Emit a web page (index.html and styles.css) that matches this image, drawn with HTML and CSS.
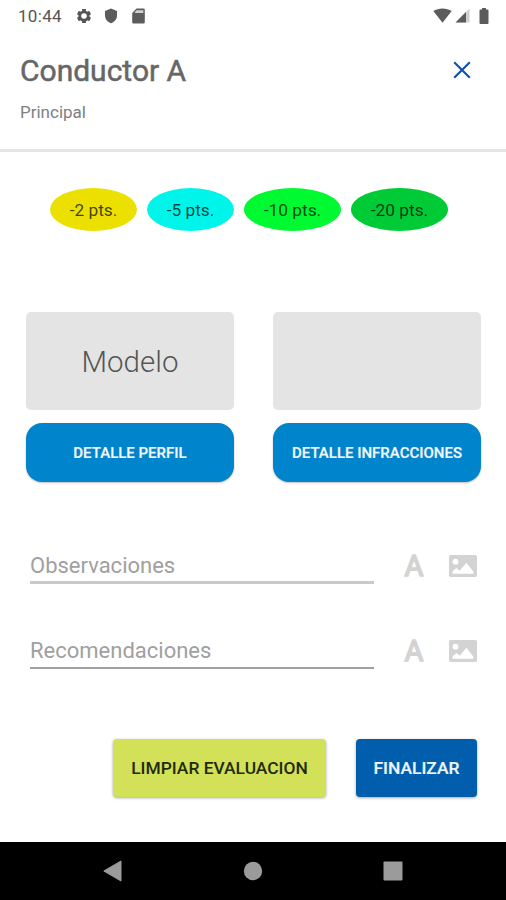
FILE: index.html
```html
<!DOCTYPE html>
<html lang="es">
<head>
  <meta charset="UTF-8" />
  <meta name="viewport" content="width=device-width, initial-scale=1.0" />
  <title>Conductor A</title>
  <link rel="stylesheet" href="styles.css">
</head>
<body>
  <div class="screen">
    <div class="status-bar">
      <span class="time">10:44</span>
      <svg class="icon-gear" width="16" height="16" viewBox="0 0 16 16">
        <path d="M8 1v14M1.9 4.5l12.2 7M14.1 4.5l-12.2 7" stroke="#555" stroke-width="3.8" />
        <circle cx="8" cy="8" r="5.6" fill="#555" />
        <circle cx="8" cy="8" r="2.8" fill="#fff" />
      </svg>
      <svg class="icon-shield" width="14" height="16" viewBox="0 0 14 16">
        <path d="M7 .6l6 2.3v4.6c0 3.6-2.5 6.500-6 7.800-3.500-1.300-6-4.200-6-7.800V2.900z" fill="#5c5c5c" />
      </svg>
      <svg class="icon-card" width="13" height="16" viewBox="0 0 13 16">
        <path d="M4.500.5h7A1.300 1.300 0 0 1 12.800 1.800v12.400a1.300 1.300 0 0 1-1.300 1.300h-10A1.300 1.300 0 0 1 .2 14.200V5z" fill="#5c5c5c" />
        <path d="M4.400 2.200h7v2.900H2.500z" fill="#d0d0d0" />
      </svg>
      <div class="status-right">
        <svg width="19" height="15" viewBox="0 0 19 15">
          <path d="M.3 3C5.500-.5 13.500-.5 18.700 3L9.500 14.700z" fill="#5c5c5c" />
        </svg>
        <svg class="icon-signal" width="15" height="15" viewBox="0 0 15 15">
          <path d="M14.500.5v14H.5z" fill="#d0d0d0" />
          <path d="M11 4v10.500H.5z" fill="#5c5c5c" />
        </svg>
        <svg class="icon-battery" width="10" height="16" viewBox="0 0 10 16">
          <path d="M3 0h4v1.600h1.500a1 1 0 0 1 1 1V15a1 1 0 0 1-1 1h-7a1 1 0 0 1-1-1V2.600a1 1 0 0 1 1-1H3z" fill="#5c5c5c" />
        </svg>
      </div>
    </div>

    <header>
      <div>
        <h1>Conductor A</h1>
        <p>Principal</p>
      </div>
      <svg class="close" width="18" height="18" viewBox="0 0 18 18">
        <path d="M1.200 1.200l15.600 15.600M16.800 1.200L1.200 16.800" stroke="#0f4fae" stroke-width="2.100" />
      </svg>
    </header>

    <div class="points">
      <div class="pill yellow">-2 pts.</div>
      <div class="pill cyan">-5 pts.</div>
      <div class="pill green wide">-10 pts.</div>
      <div class="pill dark-green wide">-20 pts.</div>
    </div>

    <div class="details">
      <div class="detail">
        <div class="card">Modelo</div>
        <button class="detail-btn">DETALLE PERFIL</button>
      </div>
      <div class="detail">
        <div class="card"></div>
        <button class="detail-btn">DETALLE INFRACCIONES</button>
      </div>
    </div>

    <div class="field">
      <div class="input observations">Observaciones</div>
      <span class="letter">A</span>
      <svg width="28" height="22" viewBox="0 0 28 22">
        <rect width="28" height="22" rx="1.800" fill="#d3d3d3" />
        <circle cx="6.500" cy="6.700" r="2.900" fill="#fff" />
        <path d="M3.600 18.700v-2.400l3.800-3.400 3.300 2.900 6.700-8.100 7 9v2z" fill="#fff" />
      </svg>
    </div>
    <div class="field">
      <div class="input recommendations">Recomendaciones</div>
      <span class="letter">A</span>
      <svg width="28" height="22" viewBox="0 0 28 22">
        <rect width="28" height="22" rx="1.800" fill="#d3d3d3" />
        <circle cx="6.500" cy="6.700" r="2.900" fill="#fff" />
        <path d="M3.600 18.700v-2.400l3.800-3.400 3.300 2.900 6.700-8.100 7 9v2z" fill="#fff" />
      </svg>
    </div>

    <div class="actions">
      <button class="clear-btn">LIMPIAR EVALUACION</button>
      <button class="finish-btn">FINALIZAR</button>
    </div>

    <nav>
      <svg width="20" height="22" viewBox="0 0 20 22">
        <path d="M.8 11L18 1v20z" fill="#9b9b9b" stroke="#9b9b9b" stroke-linejoin="round" />
      </svg>
      <svg width="20" height="20" viewBox="0 0 20 20">
        <circle cx="10" cy="10" r="9.200" fill="#9b9b9b" />
      </svg>
      <svg width="20" height="20" viewBox="0 0 20 20">
        <rect x=".5" y=".5" width="19" height="19" rx="1" fill="#9b9b9b" />
      </svg>
    </nav>
  </div>
</body>
</html>
```

FILE: styles.css
```css
* {
  box-sizing: border-box;
}
body {
  font-family: Roboto, sans-serif;
  margin: 0;
  background-color: #fff;
}
.screen {
  display: flex;
  flex-direction: column;
  height: 900px;
}
svg {
  display: block;
  flex-shrink: 0;
}
button {
  font-family: inherit;
  padding: 0;
  border: none;
  white-space: nowrap;
  cursor: pointer;
}

.status-bar {
  display: flex;
  align-items: center;
  height: 31px;
  padding: 0 17px 0 18px;
}
.time {
  width: 58px;
  font-size: 17px;
  letter-spacing: 0.3px;
  color: #555;
}
.icon-shield {
  margin-left: 12px;
}
.icon-card {
  margin-left: 14px;
}
.status-right {
  display: flex;
  align-items: center;
  margin-left: auto;
}
.icon-signal {
  margin-left: 3px;
}
.icon-battery {
  margin-left: 9px;
}

header {
  display: flex;
  justify-content: space-between;
  height: 121px;
  padding: 22px 35px 0 20px;
  border-bottom: 3px solid #e4e4e4;
}
header h1 {
  margin: 0;
  font-size: 30px;
  font-weight: 400;
  line-height: 36px;
  color: #666;
  -webkit-text-stroke: 0.5px #666;
}
header p {
  margin: 13px 0 0;
  font-size: 17px;
  line-height: 20px;
  color: #808080;
}
.close {
  margin-top: 8px;
}

.points {
  display: flex;
  gap: 10px;
  margin: 36px 0 0 50px;
}
.pill {
  width: 87px;
  height: 43px;
  border-radius: 50%;
  font-size: 17.300px;
  line-height: 44px;
  text-align: center;
  color: rgba(0, 0, 0, 0.72);
}
.pill.wide {
  width: 97px;
}
.yellow {
  background-color: #ebe000;
}
.cyan {
  background-color: #00f5ea;
}
.green {
  background-color: #00fa32;
}
.dark-green {
  background-color: #00cb36;
}

.details {
  display: grid;
  grid-template-columns: 1fr 1fr;
  gap: 39px;
  margin: 81px 25px 0 26px;
}
.card {
  height: 98px;
  border-radius: 5px;
  background-color: #e4e4e4;
  font-size: 29.500px;
  font-weight: 300;
  line-height: 101px;
  text-align: center;
  color: #555;
}
.detail-btn {
  display: block;
  width: 100%;
  height: 59px;
  margin-top: 13px;
  border-radius: 16px;
  background-color: #0084cc;
  box-shadow: 0 1px 2px rgba(0, 0, 0, 0.25);
  font-size: 15px;
  font-weight: 500;
  color: #f2f8ff;
  -webkit-text-stroke: 0.2px #f2f8ff;
}

.field {
  display: flex;
  align-items: center;
  height: 44px;
  margin: 62px 29px 0 30px;
}
.field + .field {
  margin-top: 41px;
}
.input {
  width: 344px;
  height: 36px;
  font-size: 22px;
  line-height: 35px;
  color: #a0a0a0;
}
.observations {
  border-bottom: 3px solid #cacaca;
}
.recommendations {
  border-bottom: 2px solid #a0a0a0;
}
.letter {
  width: 20px;
  margin: 0 25px 0 30px;
  font-size: 29px;
  font-weight: 400;
  text-align: center;
  color: #d3d3d3;
  -webkit-text-stroke: 1.500px #d3d3d3;
}

.actions {
  display: flex;
  justify-content: flex-end;
  gap: 30px;
  margin: 66px 29px 0 0;
}
.actions button {
  height: 58px;
  border-radius: 4px;
  box-shadow: 0 1px 3px rgba(0, 0, 0, 0.35);
  font-size: 17.400px;
  font-weight: 500;
}
.clear-btn {
  width: 213px;
  background-color: #d2e157;
  color: #222a08;
}
.actions .finish-btn {
  width: 121px;
  background-color: #005eac;
  color: #edf5ff;
  -webkit-text-stroke: 0.2px #edf5ff;
}

nav {
  display: flex;
  align-items: center;
  justify-content: space-between;
  height: 58px;
  margin-top: auto;
  padding: 0 103px;
  background-color: #000;
}
```
